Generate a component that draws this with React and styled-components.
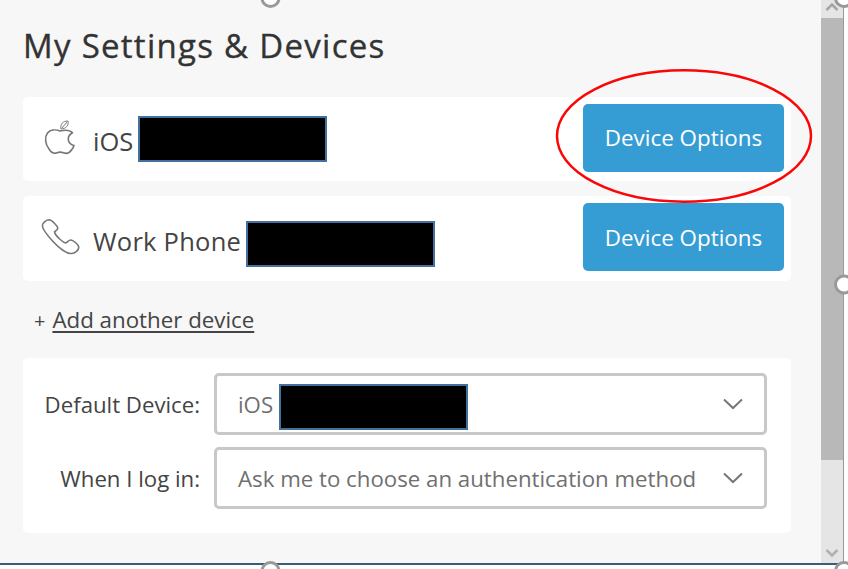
import styled, { createGlobalStyle } from "styled-components";

const GlobalStyle = createGlobalStyle`
    * {
        box-sizing: border-box;
    }

    body {
        margin: 0;
        background: #fefefe;
        overflow: hidden;
        font-family: "Open Sans", "Noto Sans", sans-serif;
        color: #444;
    }
`;

const Frame = styled.div`
    position: relative;
    display: flex;
    width: 848px;
    height: 569px;
    overflow: hidden;
    padding-bottom: 4px;
`;

const Window = styled.div`
    display: flex;
    width: 844px;
    height: 565px;
    border-right: 1px solid #999;
    border-bottom: 2px solid #3c5c78;
`;

const Content = styled.main`
    width: 821px;
    padding: 21px 30px 0 23px;
    background: #f7f7f7;
`;

const Title = styled.h1`
    margin: 0 0 26px;
    height: 50px;
    font-family: "Open Sans", sans-serif;
    font-size: 33px;
    font-weight: 400;
    line-height: 50px;
    letter-spacing: 1.28px;
    -webkit-text-stroke: 0.35px #333;
    white-space: nowrap;
    color: #333;
`;

const DeviceRow = styled.section`
    display: flex;
    align-items: flex-start;
    height: ${props => props.$height}px;
    margin-bottom: 15px;
    padding: 7px 7px 0 17px;
    border-radius: 5px;
    background: #fff;
`;

const DeviceIcon = styled.svg`
    flex: none;
    width: 40px;
    height: 44px;
    margin-top: 13px;
    fill: none;
    stroke: #777;
    stroke-width: 1.6;
    stroke-linejoin: round;
`;

const DeviceName = styled.span`
    width: ${props => props.$width}px;
    margin: ${props => props.$top}px 0 0 13px;
    font-size: 25.5px;
    line-height: 36px;
    letter-spacing: ${props => props.$spacing}px;
    white-space: nowrap;
`;

const Redacted = styled.span`
    flex: none;
    width: 189px;
    height: 46px;
    margin-top: ${props => props.$top || 0}px;
    border: 2px solid #41719c;
    background: #000;
`;

const OptionsButton = styled.button`
    width: 201px;
    height: 68px;
    margin-left: auto;
    padding: 0 0 ${props => props.$bottom}px;
    border: 0;
    border-radius: 5px;
    background: #369dd4;
    color: #fff;
    font: 400 22.4px "Open Sans", sans-serif;
    white-space: nowrap;
`;

const AddDevice = styled.div`
    height: 62px;
    padding-left: 11px;
    font-size: 22.3px;
    line-height: 47px;
    white-space: nowrap;

    span {
        margin-right: 7px;
        font-size: 20px;
    }

    a {
        color: #444;
        text-decoration: underline;
        text-decoration-thickness: 2px;
        text-underline-offset: 3px;
    }
`;

const Preferences = styled.section`
    display: flex;
    flex-direction: column;
    gap: 12px;
    height: 175px;
    padding: 15px 24px 0 0;
    border-radius: 5px;
    background: #fff;
`;

const Field = styled.div`
    display: flex;
    align-items: center;
    height: 62px;
`;

const Label = styled.label`
    width: 177px;
    margin-right: 14px;
    font-size: 22.2px;
    text-align: right;
    white-space: nowrap;
`;

const Select = styled.div`
    display: flex;
    flex: 1;
    align-items: center;
    height: 62px;
    padding: 0 20px 0 21px;
    border: 3px solid #c8c8c8;
    border-radius: 5px;
    color: #707070;
    font-size: 22.25px;
    white-space: nowrap;
`;

const SelectText = styled.span`
    width: ${props => props.$width};
`;

const Chevron = styled.svg`
    width: 20px;
    height: 12px;
    margin: 0 1px 0 auto;
    fill: none;
    stroke: #777;
    stroke-width: 2;
`;

const Scrollbar = styled.aside`
    display: flex;
    flex-direction: column;
    justify-content: space-between;
    align-items: center;
    width: 22px;
    background: #e5e5e5;
`;

const Thumb = styled.div`
    width: 22px;
    height: 442px;
    margin-bottom: 86px;
    background: #b8b8b8;
`;

const Arrow = styled.svg`
    width: 14px;
    height: 17px;
    fill: none;
    stroke: ${props => props.$color};
    stroke-width: 2.5;
`;

const Annotations = styled.svg`
    position: absolute;
    top: 0;
    left: 0;
    pointer-events: none;
`;

const handles = [[270.5, -2], [844, -2], [844, 284.5], [270.5, 571], [844, 571]];

function AppleIcon() {
    return (
        <DeviceIcon viewBox="40 117 40 44">
            <path d="M61 129 C60 124 63 121 68 121 C69 125 66 129 61 129Z M62 128L67 122" strokeWidth="1" />
            <path d="M60 131 C55 129 50 130 47.5 133 C44.5 137 45 144 49 149 C51.5 153 54 154 57 152.8 C59.5 151.8 61 151.8 63.5 152.8 C67 154.3 69 153.5 71.5 150 C73 148 73.8 146.5 74 145.5 C70.5 144.5 68.5 142.5 68.3 139.5 C68 136.5 69.5 134.5 72.5 132.8 C69.5 129.5 66 129.5 60 131Z" />
        </DeviceIcon>
    );
}

function PhoneIcon() {
    return (
        <DeviceIcon viewBox="40 216 40 44">
            <path d="M42.5 226.5 C41.5 223.5 46 220 49 219.8 C52 220 57.5 226 57.8 228 C57.8 230 55.5 230.5 54.5 232 C55 235 62 242 65.5 243 C67.5 242.5 68.5 239.8 71 240 C73.5 240.5 78.5 244.5 78.8 247 C79 250 75 253.5 71.5 253.5 C67 254 59 248 53 241.5 C48 236 43 230.5 42.5 226.5Z" />
        </DeviceIcon>
    );
}

function SelectBox({ children }) {
    return (
        <Select>
            {children}
            <Chevron viewBox="0 0 20 12">
                <path d="M1 1.5L10 10L19 1.5" />
            </Chevron>
        </Select>
    );
}

function App() {
    return (
        <Frame>
            <GlobalStyle />
            <Window>
                <Content>
                    <Title>My Settings &amp; Devices</Title>
                    <DeviceRow $height={84}>
                        <AppleIcon />
                        <DeviceName $width={45} $top={19} $spacing={0}>iOS</DeviceName>
                        <Redacted $top={12} />
                        <OptionsButton $bottom={2}>Device Options</OptionsButton>
                    </DeviceRow>
                    <DeviceRow $height={85}>
                        <PhoneIcon />
                        <DeviceName $width={153} $top={20} $spacing={0.25}>Work Phone</DeviceName>
                        <Redacted $top={18} />
                        <OptionsButton $bottom={0}>Device Options</OptionsButton>
                    </DeviceRow>
                    <AddDevice>
                        <span>+</span>
                        <a>Add another device</a>
                    </AddDevice>
                    <Preferences>
                        <Field>
                            <Label>Default Device:</Label>
                            <SelectBox>
                                <SelectText $width="41px">iOS</SelectText>
                                <Redacted $top={5} />
                            </SelectBox>
                        </Field>
                        <Field>
                            <Label>When I log in:</Label>
                            <SelectBox>
                                <SelectText $width="auto">Ask me to choose an authentication method</SelectText>
                            </SelectBox>
                        </Field>
                    </Preferences>
                </Content>
                <Scrollbar>
                    <Arrow $color="#a5a5a5" viewBox="0 0 14 17">
                        <path d="M1.5 10L7 4.5L12.5 10" />
                    </Arrow>
                    <Thumb />
                    <Arrow $color="#b0b0b0" viewBox="0 0 14 17">
                        <path d="M1.5 4L7 9.5L12.5 4" />
                    </Arrow>
                </Scrollbar>
            </Window>
            <Annotations width="848" height="569">
                <ellipse cx="684" cy="136" rx="127" ry="65.7" fill="none" stroke="#fa0606" strokeWidth="2.5" />
                {handles.map(([x, y]) => (
                    <circle key={`${x}-${y}`} cx={x} cy={y} r="8.5" fill="#fff" stroke="#999" strokeWidth="3" />
                ))}
            </Annotations>
        </Frame>
    );
}

export default App;
